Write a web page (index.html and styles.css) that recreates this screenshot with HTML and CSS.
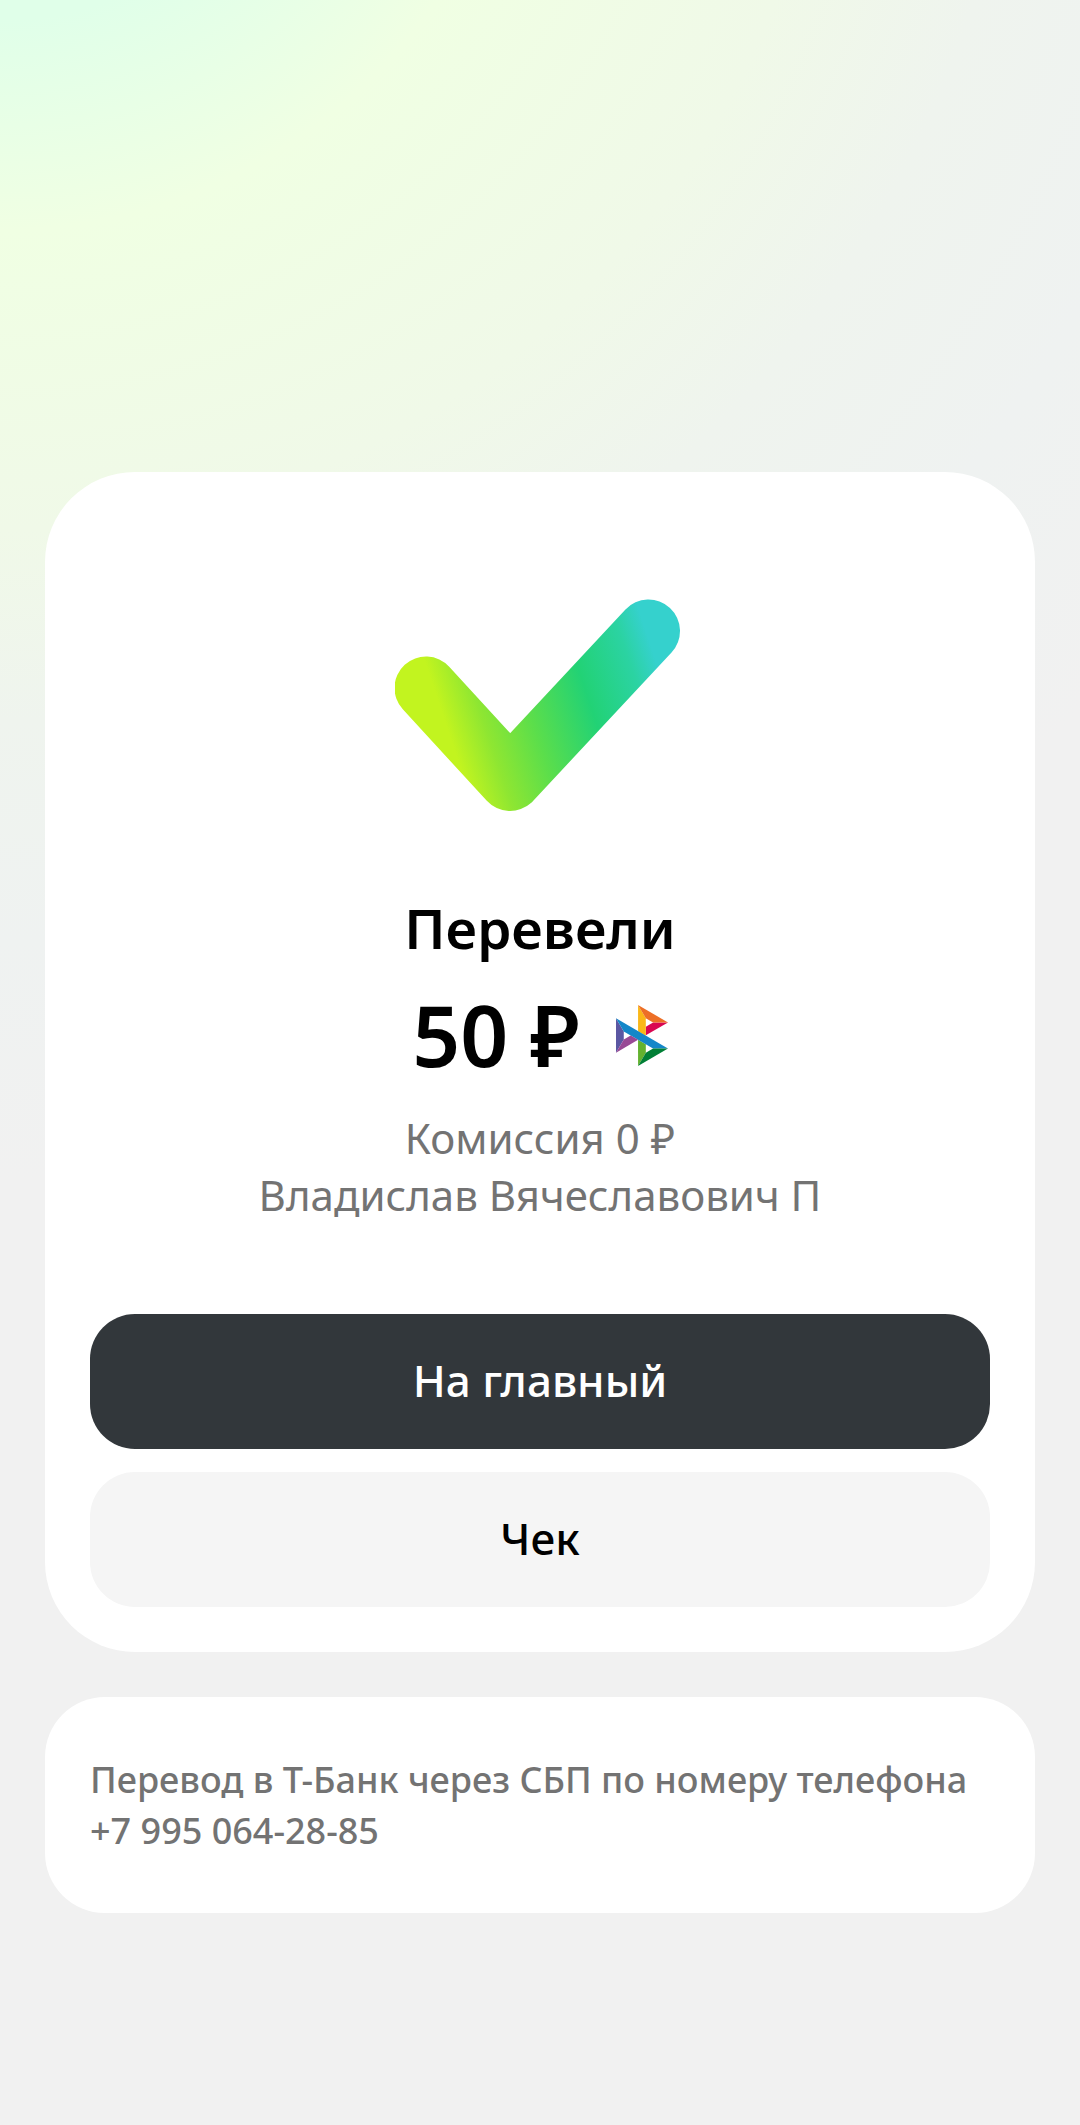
FILE: index.html
```html
<!DOCTYPE html>
<html lang="ru">
<head>
<meta charset="utf-8">
<meta name="viewport" content="width=device-width, initial-scale=1">
<title>Перевели</title>
<link rel="stylesheet" href="styles.css">
</head>
<body>
<main class="page">
  <section class="card result">
    <svg class="check" viewBox="395 599 290 213" aria-hidden="true">
      <defs>
        <linearGradient id="check-fill" gradientUnits="userSpaceOnUse" x1="433" y1="700" x2="652" y2="627">
          <stop offset="0.02" stop-color="#c2f41f"/>
          <stop offset="0.18" stop-color="#8ee632"/>
          <stop offset="0.38" stop-color="#5bde4b"/>
          <stop offset="0.64" stop-color="#22d275"/>
          <stop offset="0.86" stop-color="#2bd3a2"/>
          <stop offset="0.97" stop-color="#35d1cd"/>
        </linearGradient>
      </defs>
      <path d="M426 688L510 779.500L648.500 631" fill="none" stroke="url(#check-fill)" stroke-width="63" stroke-linecap="round" stroke-linejoin="round"/>
    </svg>
    <h1 class="title">Перевели</h1>
    <div class="amount">
      <span>50 ₽</span>
      <svg class="sbp" viewBox="0 0 97.300 120" preserveAspectRatio="none" role="img" aria-label="СБП">
        <path fill="#5b57a2" d="M0 26.120l14.532 25.975v15.844L.017 93.863z"/>
        <path fill="#d90751" d="M55.797 42.643l13.617-8.346 27.868-.026-41.485 25.414z"/>
        <path fill="#fab718" d="M55.720 25.967l.077 34.390-14.566-8.950V0z"/>
        <path fill="#ed6f26" d="M97.282 34.271l-27.869.026-13.693-8.330L41.231 0z"/>
        <path fill="#63b22f" d="M55.797 94.007V77.322l-14.566-8.780.008 51.458z"/>
        <path fill="#1487c9" d="M69.380 85.737L14.531 52.095 0 26.120l97.223 59.583z"/>
        <path fill="#017f36" d="M41.240 120l14.556-25.993 13.583-8.270 27.843-.034z"/>
        <path fill="#984995" d="M.017 93.863l41.333-25.320-13.896-8.526-12.922 7.922z"/>
      </svg>
    </div>
    <p class="details">Комиссия 0 ₽<br>Владислав Вячеславович П</p>
    <div class="actions">
      <button class="button button-primary" type="button">На главный</button>
      <button class="button" type="button">Чек</button>
    </div>
  </section>
  <section class="card note">
    <p class="note-text">Перевод в Т-Банк через СБП по номеру телефона +7 995 064-28-85</p>
  </section>
</main>
</body>
</html>
```
FILE: styles.css
```css
* {
  box-sizing: border-box;
}

body {
  margin: 0;
  min-height: 100vh;
  font-family: "Noto Sans", "Open Sans", sans-serif;
  color: #000;
  background: #f1f1f1 radial-gradient(circle at 0 -300px, #e0ffe9 320px, #f0ffe3 530px, #f0f9e8 830px, #eff4ee 1020px, #eff2f1 1240px, #f1f1f1 1480px) no-repeat;
}

.page {
  display: flex;
  flex-direction: column;
  gap: 45px;
  padding: 472px 45px 45px;
}

.card {
  background: #fff;
}

.result {
  display: flex;
  flex-direction: column;
  align-items: center;
  padding: 127px 45px 45px;
  border-radius: 90px;
  text-align: center;
}

.check {
  width: 290px;
  height: 213px;
}

.title {
  margin: 83px 0 0;
  font-size: 55px;
  line-height: 66px;
  font-weight: 600;
}

.amount {
  display: flex;
  align-items: center;
  gap: 36px;
  margin-top: 24px;
  font-size: 84px;
  line-height: 100px;
  font-weight: 600;
}

.sbp {
  width: 52px;
  height: 61px;
}

.details {
  margin: 24px 0 0;
  font-size: 42px;
  line-height: 57px;
  color: #737373;
}

.actions {
  display: flex;
  flex-direction: column;
  align-self: stretch;
  gap: 23px;
  margin-top: 91px;
}

.button {
  height: 135px;
  padding: 0 24px 4px;
  border: 0;
  border-radius: 45px;
  background: #f5f5f5;
  color: #000;
  font: inherit;
  font-size: 44px;
  font-weight: 500;
}

.button-primary {
  background: #32373b;
  color: #fff;
}

.note {
  padding: 57px 45px;
  border-radius: 60px;
}

.note-text {
  margin: 0;
  font-size: 36px;
  line-height: 51px;
  font-weight: 500;
  color: #737373;
}
```
